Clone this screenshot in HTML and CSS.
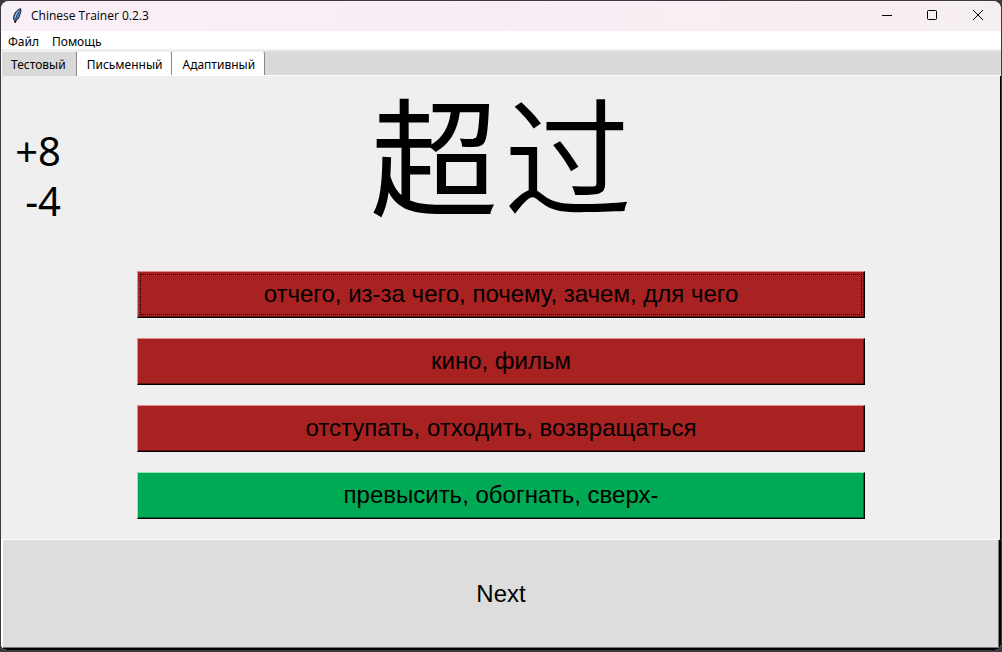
FILE: index.html
```html
<!DOCTYPE html>
<html lang="ru">
<head>
<meta charset="utf-8">
<title>Chinese Trainer 0.2.3</title>
<link rel="stylesheet" href="styles.css">
</head>
<body>
<div class="window">
  <header class="titlebar">
    <svg class="app-icon" width="16" height="16" viewBox="0 0 16 16" aria-hidden="true">
      <path d="M11.800.8C9.200 1 6.200 4 5 7.400c-.6 1.800-.5 3.600.2 4.800L6.300 15l.7-2.400C9.400 11.200 10.400 9 10.900 6.600 11.700 4.800 12 2.600 11.800.8Z" fill="#4f86c6" stroke="#111b2c" stroke-width="1"/>
      <path d="M10.800 2.500C8.400 5.500 7 9 6.400 14.800" fill="none" stroke="#101828" stroke-width=".6"/>
      <path d="M9.600 3C7.800 4.700 6.600 7 6 9.400" fill="none" stroke="#a9cdf2" stroke-width="1"/>
    </svg>
    <h1 class="title">Chinese Trainer 0.2.3</h1>
    <div class="controls">
      <button class="control" type="button" aria-label="Свернуть"><svg width="12" height="12" viewBox="0 0 12 12"><path d="M2 5.500H12"/></svg></button>
      <button class="control" type="button" aria-label="Развернуть"><svg width="12" height="12" viewBox="0 0 12 12"><rect x="1.500" y=".5" width="9" height="9" rx="1"/></svg></button>
      <button class="control" type="button" aria-label="Закрыть"><svg width="12" height="12" viewBox="0 0 12 12"><path d="M1 0 11 10M11 0 1 10"/></svg></button>
    </div>
  </header>
  <nav class="menubar">
    <button class="menu" type="button">Файл</button>
    <button class="menu" type="button">Помощь</button>
  </nav>
  <div class="tabs" role="tablist">
    <button class="tab tab-active" type="button" role="tab" aria-selected="true">Тестовый</button>
    <button class="tab" type="button" role="tab" aria-selected="false">Письменный</button>
    <button class="tab" type="button" role="tab" aria-selected="false">Адаптивный</button>
  </div>
  <main class="panel">
    <div class="score"><span>+8</span><span>-4</span></div>
    <div class="word" lang="zh"><span class="heavy">超</span><span class="light">过</span></div>
    <div class="answers">
      <button class="answer wrong focused" type="button">отчего, из-за чего, почему, зачем, для чего</button>
      <button class="answer wrong" type="button">кино, фильм</button>
      <button class="answer wrong" type="button">отступать, отходить, возвращаться</button>
      <button class="answer right" type="button">превысить, обогнать, сверх-</button>
    </div>
  </main>
  <button class="next" type="button">Next</button>
</div>
</body>
</html>
```
FILE: styles.css
```css
* { box-sizing: border-box; }

body {
  margin: 0;
  height: 100vh;
  padding: 1px 1px 2px;
  background: #3c3940;
  font-family: "Noto Sans", "Open Sans", sans-serif;
  font-size: 12px;
  color: #000;
}

button {
  margin: 0;
  border: 0;
  border-radius: 0;
  font: inherit;
  color: inherit;
}

.window {
  display: flex;
  flex-direction: column;
  height: 100%;
  overflow: hidden;
  border-radius: 8px 8px 6px 6px;
  background: #efefef;
}

.titlebar {
  display: flex;
  align-items: center;
  height: 30px;
  padding-left: 8px;
  background: linear-gradient(90deg, #f9eff7, #f9edf5 50%, #f6eff0);
}

.title {
  margin: 0 0 0 6px;
  font-size: 12px;
  font-weight: 400;
  line-height: 28px;
  font-family: "Open Sans", sans-serif;
}

.controls { display: flex; margin-left: auto; }

.control {
  display: flex;
  align-items: center;
  justify-content: center;
  width: 46px;
  height: 30px;
  padding: 0;
  background: transparent;
}

.control svg { fill: none; stroke: #000; stroke-width: 1; }

.menubar {
  display: flex;
  gap: 13px;
  height: 18px;
  padding-left: 7px;
  background: #fff;
}

.menu { padding: 1px 0 0; line-height: 20px; background: transparent; }

.tabs {
  display: flex;
  height: 27px;
  border-top: 2px solid #efefef;
  border-bottom: 1px solid #fff;
  background: #d9d9d9;
}

.tab {
  padding: 2px 9px 0;
  border-top: 1px solid #efefef;
  border-left: 1px solid #fff;
  border-right: 1px solid #888;
  border-radius: 2px 3px 0 0;
  line-height: 22px;
  background: #fff;
}

.tab-active { margin-bottom: -1px; padding-right: 10px; background: #d9d9d9; }

.panel {
  flex: 1;
  display: grid;
  grid-template-columns: 136px 1fr 135px;
  grid-template-rows: 195px auto;
  border-right: 1px solid #000;
}

.score {
  display: flex;
  flex-direction: column;
  align-items: flex-end;
  width: 60px;
  padding-top: 50px;
  font-size: 40px;
  line-height: 50px;
}

.word {
  display: flex;
  justify-content: center;
  gap: 6px;
  font-family: "Noto Sans CJK KR", sans-serif;
  font-size: 128px;
  line-height: 152px;
}

.heavy { font-weight: 400; font-family: "Noto Sans CJK SC", sans-serif; }
.light { font-weight: 350; }

.answers {
  grid-column: 2;
  grid-row: 2;
  display: flex;
  flex-direction: column;
  gap: 20px;
}

.answer {
  position: relative;
  height: 47px;
  padding: 0 0 2px;
  border: 1px solid #000;
  font-family: "Liberation Sans", Arial, sans-serif;
  font-size: 24px;
}

.wrong {
  border-top-color: #e98a8a;
  border-left-color: #e98a8a;
  background: #a92222;
  box-shadow: inset -1px -1px #651414;
}

.right {
  border-top-color: #8ce9b6;
  border-left-color: #8ce9b6;
  background: #00a953;
  box-shadow: inset -1px -1px #006532;
}

.focused::after {
  content: "";
  position: absolute;
  inset: 2px;
  border: 1px dotted #000;
}

.next {
  height: 111px;
  padding: 0;
  border: 1px solid #fff;
  border-left-width: 2px;
  border-right: 2px solid #000;
  border-bottom: 2px solid #000;
  font-family: "Liberation Sans", Arial, sans-serif;
  font-size: 24px;
  background: #ddd;
  box-shadow: inset -1px -1px #777;
}
```
